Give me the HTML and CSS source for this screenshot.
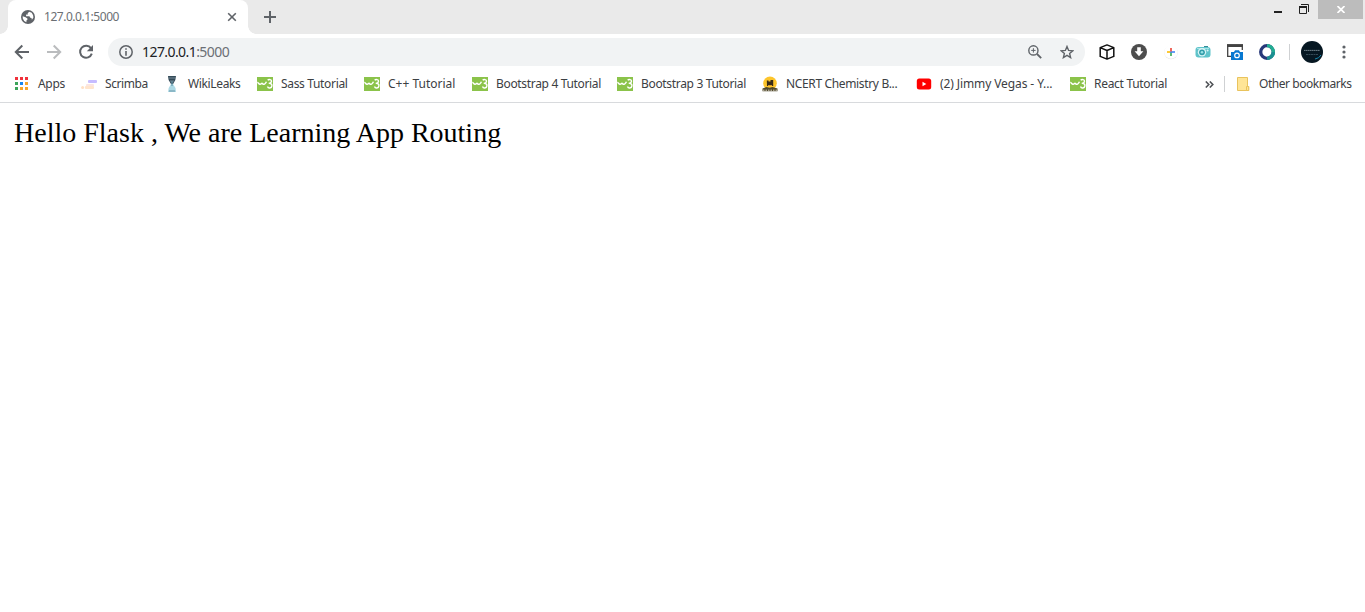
FILE: index.html
```html
<!DOCTYPE html>
<html lang="en">
<head>
<meta charset="utf-8">
<title>127.0.0.1:5000</title>
<link rel="stylesheet" href="styles.css">
</head>
<body>
<svg class="defs" width="0" height="0">
  <symbol id="w3" viewBox="0 0 16 14">
    <rect width="16" height="14" fill="#8bc34a"/>
    <path d="M.3 5.6C1.2 5.2 1.6 7.3 3 7.3S4.6 5.8 5.2 6.3s.8 1.2 2 1S8.8 5.6 9.5 4.8M10.7 3.3c1-1.2 4-1 3.8 1C14.4 5.8 13 6.3 11.7 6.4c2-.2 3.4.7 3.2 2.4-.3 2.7-3.7 2.8-4.4.8" fill="none" stroke="#fff" stroke-width="1.4"/>
  </symbol>
</svg>

<header class="tabstrip">
  <div class="tab">
    <svg class="globe" width="14" height="14" viewBox="0 0 14 14"><circle cx="7" cy="7" r="7" fill="#5f6368"/><path d="M8.3 1.7 6.6 3.2 7 4.6H5.2L5 6.2h3.4l.9 1.6 1.2.3.4 1.7 1.5-2.2-.3-2.4-1.4-2.4z" fill="#fff"/><path d="M1.7 6.3l2.9.9 1.8 1.3v1.3l-1 .6v1.8l-2.2-1.3-1.4-2.4z" fill="#fff"/></svg>
    <span class="tab-title">127.0.0.1:5000</span>
    <svg class="tab-close" width="10" height="10" viewBox="0 0 10 10"><path d="M1.2 1.2l7.6 7.6M8.8 1.2L1.2 8.8" stroke="#5f6368" stroke-width="1.6"/></svg>
  </div>
  <svg class="new-tab" width="14" height="14" viewBox="0 0 14 14"><path d="M7 1v12M1 7h12" stroke="#5f6368" stroke-width="2"/></svg>
  <div class="window-controls">
    <svg class="minimize" width="8" height="2"><rect width="8" height="2" fill="#222"/></svg>
    <svg class="restore" width="10" height="10" viewBox="0 0 10 10"><path d="M2 .5h7.5V8" fill="none" stroke="#222"/><path d="M.5 2.5h7v7h-7z" fill="none" stroke="#222"/><path d="M0 3h8" stroke="#222" stroke-width="2"/></svg>
    <div class="window-close"><svg width="8" height="7" viewBox="0 0 8 7"><path d="M.5 0l7 7M7.5 0l-7 7" stroke="#fff" stroke-width="1.7"/></svg></div>
  </div>
</header>

<nav class="toolbar">
  <svg class="nav-icon" width="16" height="16" viewBox="0 0 16 16"><path d="M15 8H2M8.3 1.5L1.8 8l6.5 6.5" fill="none" stroke="#5f6368" stroke-width="2"/></svg>
  <svg class="nav-icon" width="16" height="16" viewBox="0 0 16 16"><path d="M1 8h13M7.7 1.5L14.2 8l-6.5 6.5" fill="none" stroke="#babcbe" stroke-width="2"/></svg>
  <svg class="nav-icon" width="16" height="16" viewBox="0 0 16 16"><path d="M13 4.2A6 6 0 1 0 13.8 9.7" fill="none" stroke="#5f6368" stroke-width="2"/><path d="M15 1v6.2H8.8z" fill="#5f6368"/></svg>
  <div class="omnibox">
    <svg class="info" width="14" height="14" viewBox="0 0 14 14"><circle cx="7" cy="7" r="6.2" fill="none" stroke="#5f6368" stroke-width="1.5"/><path d="M7 3.2v1.6M7 6v4.8" stroke="#5f6368" stroke-width="1.6"/></svg>
    <span class="url">127.0.0.1<span class="port">:5000</span></span>
    <svg class="magnify" width="14" height="14" viewBox="0 0 14 14"><path d="M9 9l4.2 4.2" stroke="#5f6368" stroke-width="1.8"/><circle cx="5.4" cy="5.4" r="4.6" fill="none" stroke="#5f6368" stroke-width="1.4"/><path d="M5.4 3.2v4.4M3.2 5.4h4.4" stroke="#5f6368"/></svg>
    <svg class="star" width="14" height="14" viewBox="0 0 14 14"><path d="M7 1.5l1.6 3.9 4.2.4-3.2 2.7 1 4.1L7 10.4l-3.6 2.2 1-4.1L1.2 5.8l4.2-.4z" fill="none" stroke="#5f6368" stroke-width="1.4"/></svg>
  </div>
  <div class="extensions">
    <svg width="16" height="16" viewBox="0 0 16 16"><path d="M8 .9l6.8 2.7v8.8L8 15.1l-6.8-2.7V3.6zM1.2 3.6L8 6.5l6.8-2.9M8 6.5v8.6" fill="none" stroke="#111" stroke-width="1.5" stroke-linejoin="round"/></svg>
    <svg width="16" height="16" viewBox="0 0 16 16"><circle cx="8" cy="8" r="8" fill="#4d4d4d"/><path d="M6.2 3.2h3.6v4h2.6L8 12.2 3.6 7.2h2.6z" fill="#fff"/></svg>
    <svg width="16" height="16" viewBox="0 0 16 16"><circle cx="8" cy="8.5" r="6.8" fill="#e2e2e2"/><circle cx="8" cy="8" r="6.8" fill="#fff"/><path d="M8 8v4" stroke="#34a853" stroke-width="1.6"/><path d="M4 8h3.2" stroke="#fbbc05" stroke-width="1.6"/><path d="M7.2 8H12" stroke="#4285f4" stroke-width="1.6"/><path d="M8 4v3.4" stroke="#ea4335" stroke-width="1.6"/></svg>
    <svg width="16" height="16" viewBox="0 0 16 16"><path d="M9 4V2h4v2z" fill="#368b97"/><rect x=".5" y="3" width="15" height="10.5" rx="3" fill="#5fc3ca"/><path d="M2 4.5h12" stroke="#a5e4e7"/><circle cx="7" cy="8.3" r="4.2" fill="#d8f4f5"/><circle cx="7" cy="8.3" r="2.9" fill="#319ca9"/><circle cx="7" cy="8.3" r="1.3" fill="#9ae1e5"/><circle cx="12.6" cy="6.5" r="1" fill="#d8f4f5"/></svg>
    <svg width="16" height="16" viewBox="0 0 16 16"><path d="M4 12.4H.7V1h14.6v5" fill="none" stroke="#424242" stroke-width="1.3"/><path d="M0 .3h16V3H0z" fill="#424242"/><path d="M4 8h3l1-1.8h4L13 8h3v8H4z" fill="#0878d1"/><circle cx="10" cy="11.4" r="2.3" fill="none" stroke="#fff" stroke-width="1.2"/></svg>
    <svg width="16" height="16" viewBox="0 0 16 16"><circle cx="8" cy="8" r="6.3" fill="none" stroke="#273879" stroke-width="3.3"/><path d="M8 1.7a6.3 6.3 0 0 1 4 11.2" fill="none" stroke="#22ad92" stroke-width="3.3"/><path d="M8 14.3A6.3 6.3 0 0 0 14.3 8" fill="none" stroke="#1b8f92" stroke-width="3.3"/></svg>
  </div>
  <i class="divider"></i>
  <svg class="avatar" width="22" height="22" viewBox="0 0 22 22"><circle cx="11" cy="11" r="11" fill="#061722"/><path d="M3 9.4h16" stroke="#71828b" stroke-dasharray="1.6 .4"/><path d="M5 13.5h12" stroke="#344a56" stroke-dasharray="2 .5"/><path d="M14 18q4-.5 6-4" stroke="#1685aa" fill="none"/></svg>
  <svg class="menu" width="4" height="14" viewBox="0 0 4 14" fill="#5f6368"><circle cx="2" cy="2" r="1.6"/><circle cx="2" cy="7" r="1.6"/><circle cx="2" cy="12" r="1.6"/></svg>
</nav>

<div class="bookmarks">
  <a class="bookmark"><svg width="16" height="16" viewBox="0 0 16 16"><path fill="#f0313b" d="M1 1h3v3H1zM6 1h3v3H6zM11 1h3v3h-3z"/><path fill="#3ca45a" d="M1 6h3v3H1zM1 11h3v3H1z"/><path fill="#1687f0" d="M6 6h3v3H6z"/><path fill="#f7a62b" d="M11 6h3v3h-3zM6 11h3v3H6zM11 11h3v3h-3z"/></svg><span class="t-apps">Apps</span></a>
  <a class="bookmark"><svg width="16" height="16" viewBox="0 0 16 16"><rect x="7" y="4" width="9" height="3" rx="1" fill="#c6bcff"/><rect x="5" y="8" width="8" height="2.4" rx="1" fill="#fbe5e1"/><rect x="4" y="10" width="9" height="3" rx="1" fill="#ffe5cd"/><circle cx="1.6" cy="11.5" r="1.5" fill="#ffe0c4"/></svg><span class="t-scrimba">Scrimba</span></a>
  <a class="bookmark"><svg width="16" height="16" viewBox="0 0 16 16"><path d="M4 0h8l-.7 4-2.2 4H7L4.6 4z" fill="#344b59"/><path d="M5 2h6M6 5h4" stroke="#728895"/><path d="M7 8h2l2.5 4 .5 4H4l.7-4z" fill="#add9e5"/><path d="M8 5v5M5 15h6" stroke="#6b98a9" stroke-width="1.2"/></svg><span class="t-wiki">WikiLeaks</span></a>
  <a class="bookmark"><svg width="16" height="14"><use href="#w3"/></svg><span class="t-sass">Sass Tutorial</span></a>
  <a class="bookmark"><svg width="16" height="14"><use href="#w3"/></svg><span class="t-cpp">C++ Tutorial</span></a>
  <a class="bookmark"><svg width="16" height="14"><use href="#w3"/></svg><span class="t-boot">Bootstrap 4 Tutorial</span></a>
  <a class="bookmark"><svg width="16" height="14"><use href="#w3"/></svg><span class="t-boot">Bootstrap 3 Tutorial</span></a>
  <a class="bookmark"><svg width="16" height="16" viewBox="0 0 16 16"><circle cx="8" cy="7.3" r="6.8" fill="#fdc52c"/><path d="M4.8 4.5h1.7v1h2V4h2.7v6H5z" fill="#382b16"/><path d="M6 9.5h4" stroke="#d99b26"/><path d="M.5 12.5l4-1.5 3 .8 3-.8 5 1.5v2.7H.5z" fill="#514929"/><path d="M1 14.2h14" stroke="#d5d3ca" stroke-dasharray="1.5 1"/></svg><span class="t-ncert">NCERT Chemistry B...</span></a>
  <a class="bookmark"><svg width="16" height="16" viewBox="0 0 16 16"><rect x=".8" y="2.6" width="14.4" height="10.8" rx="2.5" fill="#f00"/><path d="M6.5 5.8v4.4L10.3 8z" fill="#fff"/></svg><span class="t-jimmy">(2) Jimmy Vegas - Y...</span></a>
  <a class="bookmark"><svg width="16" height="14"><use href="#w3"/></svg><span class="t-react">React Tutorial</span></a>
  <svg class="overflow" width="9" height="7" viewBox="0 0 9 7"><path d="M.8.5l3 3-3 3M4.8.5l3 3-3 3" fill="none" stroke="#505357" stroke-width="1.6"/></svg>
  <i class="divider"></i>
  <a class="bookmark"><svg width="16" height="16" viewBox="0 0 16 16"><path d="M2.5 1.5h10v9h1.2v4H2.5z" fill="#ffe596" stroke="#e9c35d"/><path d="M11.5 14.5v-4h2.2v4z" fill="#ffe596" stroke="#e9c35d"/></svg><span class="t-other">Other bookmarks</span></a>
</div>

<main class="page">Hello Flask , We are Learning App Routing</main>
</body>
</html>
```
FILE: styles.css
```css
* { box-sizing: border-box; }
body {
  margin: 0;
  height: 612px;
  overflow: hidden;
  background: #fff;
  font-family: "Noto Sans", "Open Sans", sans-serif;
}
svg { display: block; flex: none; }
.defs { position: absolute; }

.tabstrip {
  display: flex;
  height: 34px;
  padding-left: 8px;
  background: #eaeaea;
}
.tab {
  position: relative;
  display: flex;
  align-items: center;
  width: 240px;
  padding: 0 11px 0 13px;
  border-radius: 8px 8px 0 0;
  background: #fff;
}
.tab::before, .tab::after {
  content: "";
  position: absolute;
  bottom: 0;
  width: 8px;
  height: 8px;
}
.tab::before { left: -8px; background: radial-gradient(circle at 0 0, transparent 7.5px, #fff 8px); }
.tab::after { right: -8px; background: radial-gradient(circle at 100% 0, transparent 7.5px, #fff 8px); }
.tab-title {
  margin-left: 9px;
  color: #6b6f74;
  font-size: 12px;
  letter-spacing: -.47px;
  line-height: 34px;
  white-space: nowrap;
}
.tab-close { margin-left: auto; }
.new-tab { margin: 10px 0 0 15px; }
.window-controls { display: flex; margin: 0 2px 0 auto; }
.minimize { margin: 11px 17px 0 0; }
.restore { margin: 4px 9px 0 0; }
.window-close {
  display: grid;
  place-items: center;
  width: 45px;
  height: 19px;
  background: #bcbcbc;
}

.toolbar {
  display: flex;
  align-items: center;
  height: 36px;
  padding-left: 14px;
}
.nav-icon { margin-right: 16px; }
.nav-icon:nth-child(3) { margin-right: 14px; }
.omnibox {
  display: flex;
  align-items: center;
  width: 977px;
  height: 28px;
  padding: 0 11px;
  border-radius: 14px;
  background: #f1f3f4;
}
.url {
  margin-left: 9px;
  color: #202124;
  font-size: 14px;
  letter-spacing: -.57px;
  line-height: 28px;
}
.port { color: #6b6f74; }
.magnify { margin-left: auto; }
.star { margin-left: 18px; }
.extensions { display: flex; gap: 16px; margin-left: 14px; }
.divider { width: 1px; height: 16px; background: #cfd1d3; }
.toolbar .divider { margin-left: 14px; }
.avatar { margin-left: 11px; }
.menu { margin-left: 19px; }

.bookmarks {
  display: grid;
  grid-template-columns: 67px 83px 93px 107px 108px 145px 145px 154px 154px 135px 19px 11px 1fr;
  align-items: center;
  height: 33px;
  padding: 0 0 4px 14px;
  border-bottom: 1px solid #d8dadd;
}
.bookmark {
  display: flex;
  align-items: center;
  gap: 8px;
  height: 28px;
  color: #3c4043;
  font-size: 12px;
  line-height: 28px;
  white-space: nowrap;
}
.t-apps { letter-spacing: -.3px; }
.t-scrimba { letter-spacing: -.42px; }
.t-wiki { letter-spacing: -.36px; }
.t-sass { letter-spacing: -.33px; }
.t-cpp { letter-spacing: 0; }
.t-boot { letter-spacing: -.33px; }
.t-ncert { letter-spacing: -.35px; }
.t-jimmy { letter-spacing: -.1px; }
.t-react { letter-spacing: -.3px; }
.t-other { letter-spacing: -.45px; }

.page {
  padding: 13px 14px;
  font-family: "Liberation Serif", serif;
  font-size: 28px;
  line-height: 34px;
}
```
